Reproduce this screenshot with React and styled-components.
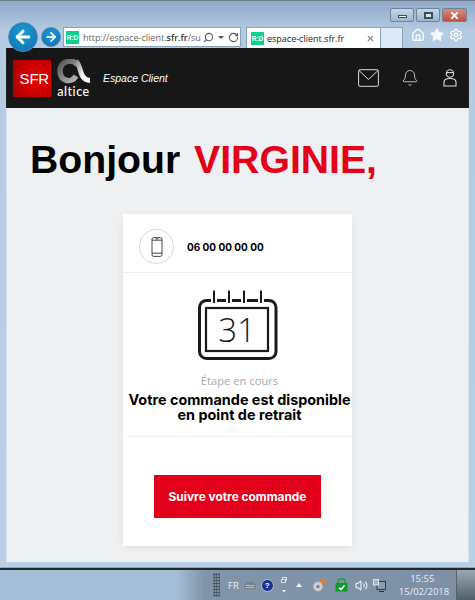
import React from 'react';
import styled, { createGlobalStyle } from 'styled-components';
import { Bell, House, Star, Settings, Search, RotateCw, ArrowLeft, ArrowRight, X, Volume2 } from 'lucide-react';

const Global = createGlobalStyle`
  html, body { margin: 0; padding: 0; width: 475px; height: 600px; overflow: hidden; }
  body { font-family: "Liberation Sans", Arial, sans-serif; }
  * { box-sizing: border-box; }
`;

const Screen = styled.div`
  width: 475px;
  height: 600px;
  display: flex;
  flex-direction: column;
  overflow: hidden;
`;

/* fenetre du navigateur */
const BrowserWindow = styled.div`
  height: 568px;
  display: flex;
  flex-direction: column;
  padding: 0 6px 5px 6px;
  background: linear-gradient(180deg, #8fa9c8 0, #b5cbe2 30px, #bad0e7 100%);
  border-top: 1px solid #6d7b8a;
  border-bottom: 1px solid #19d7ee;
`;

const Chrome = styled.div`
  height: 47px;
  display: flex;
  align-items: flex-start;
  position: relative;
  z-index: 2;
`;

const NavButtons = styled.div`
  display: flex;
  align-items: center;
  gap: 3px;
  margin: 21px 0 0 2px;
`;

const NavCircle = styled.div`
  width: ${p => p.$size}px;
  height: ${p => p.$size}px;
  border-radius: 50%;
  display: flex;
  align-items: center;
  justify-content: center;
  background: radial-gradient(circle at 50% 35%, #1e9bd8, #0a70ac);
  border: 1px solid #5f87ab;
  color: #fff;
`;

const AddressBar = styled.div`
  width: 178px;
  height: 20px;
  margin: 26px 0 0 2px;
  display: flex;
  align-items: center;
  background: #fff;
  border: 1px solid #8ba1b8;
  padding: 0 3px 0 2px;
  color: #555;
`;

const Favicon = styled.div`
  width: 13px;
  height: 13px;
  flex: none;
  background: #0fd08c;
  color: #fff;
  font: bold 6.5px "Liberation Sans", sans-serif;
  display: flex;
  align-items: center;
  justify-content: center;
`;

const Url = styled.div`
  width: 116px;
  flex: none;
  margin-left: 4px;
  white-space: nowrap;
  font: 9px "Open Sans", sans-serif;
  color: #666;
  b { font-weight: 600; color: #333; }
`;

const BarIcons = styled.div`
  display: flex;
  align-items: center;
  gap: 4px;
  margin-left: 4px;
  color: #555;
`;

const SmallCaret = styled.div`
  width: 0;
  height: 0;
  border-left: 3px solid transparent;
  border-right: 3px solid transparent;
  border-top: 3px solid #555;
`;

const UpCaret = styled(SmallCaret)`
  margin-left: ${p => p.$ml}px;
  border-top: none;
  border-bottom: 4px solid #eef3f8;
`;

const Tab = styled.div`
  width: 135px;
  height: 21px;
  margin: 26px 0 0 5px;
  display: flex;
  align-items: center;
  padding: 0 5px 0 4px;
  background: #fff;
  border: 1px solid #8ba1b8;
  border-bottom: none;
  color: #888;
`;

const TabLabel = styled.div`
  flex: 1;
  margin-left: 3px;
  font: 9px "Open Sans", sans-serif;
  color: #222;
`;

const NewTab = styled.div`
  width: 22px;
  height: 21px;
  margin-top: 26px;
  background: #dce9f7;
  border: 1px solid #8ba1b8;
  border-left: none;
  border-bottom: none;
`;

const RightCol = styled.div`
  flex: 1;
  display: flex;
  flex-direction: column;
  align-items: flex-end;
  margin-left: -13px;
`;

const Caption = styled.div`
  display: flex;
  gap: 2px;
  margin: 7px 2px 0 0;
`;

const CaptionButton = styled.div`
  width: ${p => p.$w}px;
  height: 14px;
  border: 1px solid #6f8399;
  border-radius: 2px;
  display: flex;
  align-items: center;
  justify-content: center;
  color: ${p => p.$close ? '#fff' : '#33475c'};
  background: ${p => p.$close
    ? 'linear-gradient(180deg, #d78d7f, #c0503f)'
    : 'linear-gradient(180deg, #c6d7e8, #9fb5cd)'};
`;

const MinGlyph = styled.div`
  width: 9px;
  height: 3px;
  margin-top: 3px;
  background: #fff;
  border: 1px solid #3b4d61;
`;

const MaxGlyph = styled.div`
  width: 9px;
  height: 7px;
  background: #d8e3ee;
  border: 2px solid #3b4d61;
`;

const ToolIcons = styled.div`
  display: flex;
  gap: 5px;
  margin: 6px 6px 0 0;
  color: #f6f9fc;
`;

/* barre noire SFR */
const Header = styled.header`
  height: 60px;
  flex: none;
  display: flex;
  align-items: center;
  background: #171717;
  padding: 0 11px 0 6px;
  border-left: 1px solid #222;
  border-right: 1px solid #222;
`;

const SfrLogo = styled.div`
  width: 38px;
  height: 37px;
  display: flex;
  align-items: center;
  justify-content: flex-end;
  padding-right: 2px;
  color: #fff;
  font: 15px "Liberation Sans", sans-serif;
  letter-spacing: -0.2px;
  background: radial-gradient(circle at 65% 50%, #f00000, #a80000);
`;

const AlticeLogo = styled.div`
  display: flex;
  flex-direction: column;
  align-items: center;
  margin-left: 6px;
  width: 33px;
`;

const AlticeWord = styled.div`
  color: #fff;
  font: 500 12.5px/12px "Lato", sans-serif;
  letter-spacing: 0.5px;
`;

const EspaceClient = styled.div`
  margin-left: 13px;
  color: #fff;
  font: italic 10.5px "Liberation Sans", sans-serif;
`;

const HeaderIcons = styled.div`
  margin-left: auto;
  display: flex;
  align-items: center;
  color: #ddd;
`;

const BellSlot = styled.div`
  display: flex;
  margin: 0 24px 0 22px;
`;

/* contenu */
const Main = styled.main`
  flex: 1;
  background: #eef0f2;
  border-left: 1px solid #d9e4f0;
  border-right: 1px solid #d9e4f0;
  display: flex;
  flex-direction: column;
`;

const Greeting = styled.h1`
  margin: 29px 0 31px 23px;
  font: bold 39.2px/46px "Liberation Sans", sans-serif;
  color: #000;
`;

const Name = styled.span`
  color: #e2001a;
  margin-left: 3px;
`;

const Card = styled.section`
  width: 229px;
  height: 332px;
  margin-left: 116px;
  background: #fff;
  box-shadow: 0 2px 8px rgba(0, 0, 0, 0.06);
  display: flex;
  flex-direction: column;
`;

const LineRow = styled.div`
  height: 59px;
  flex: none;
  display: flex;
  align-items: center;
  padding: 7px 0 0 16px;
  gap: 13px;
  border-bottom: 1px solid #eef0f2;
`;

const PhoneBadge = styled.div`
  width: 35px;
  height: 35px;
  border-radius: 50%;
  border: 1px solid #d5d5dc;
  display: flex;
  align-items: center;
  justify-content: center;
`;

const PhoneNumber = styled.div`
  font: bold 10px "Inter", sans-serif;
  color: #000;
`;

const Status = styled.div`
  display: flex;
  flex-direction: column;
  align-items: center;
  padding: 17px 0 0 4px;
`;

const CalendarSvg = styled.svg`
  margin-left: -4px;
`;

const StepLabel = styled.div`
  margin-top: 12px;
  font: 11.2px/16px "Open Sans", sans-serif;
  color: #a9a9b4;
`;

const StatusTitle = styled.div`
  margin-top: 3px;
  font: bold 14.4px/15px "Inter", sans-serif;
  text-align: center;
  color: #000;
  white-space: nowrap;
`;

const Divider = styled.div`
  height: 1px;
  margin: 14px 0 0 4px;
  background: #eef0f2;
`;

const TrackButton = styled.button`
  width: 167px;
  height: 43px;
  margin: 38px 0 0 31px;
  border: none;
  background: #e2001a;
  color: #fff;
  font: bold 11.9px "Inter", sans-serif;
`;

/* barre des taches */
const Taskbar = styled.footer`
  height: 32px;
  flex: none;
  display: flex;
  align-items: center;
  background: linear-gradient(90deg, #a6bfd9 0, #a6bfd9 175px, #8094aa 205px, #7d90a6 100%);
  border-top: 2px solid #22272e;
`;

const Grip = styled.div`
  width: 7px;
  height: 24px;
  margin-left: 213px;
  background-image: radial-gradient(#4a5562 1px, transparent 1px);
  background-size: 2.5px 3px;
`;

const Lang = styled.div`
  margin-left: 8px;
  font: 9.5px "Open Sans", sans-serif;
  color: #e8eef5;
`;

const TrayItem = styled.div`
  display: flex;
  align-items: center;
  margin-left: ${p => p.$ml}px;
`;

const HelpDot = styled.div`
  width: 13px;
  height: 13px;
  border-radius: 50%;
  background: #1a2f9c;
  border: 1px solid #b8c4d0;
  color: #fff;
  font: bold 8px/11px "Liberation Sans", sans-serif;
  text-align: center;
`;

const Clock = styled.div`
  margin-left: 13px;
  width: 47px;
  text-align: center;
  font: 9.5px/13px "Open Sans", sans-serif;
  color: #e8eef5;
  white-space: nowrap;
`;

const ShowDesktop = styled.div`
  width: 19px;
  height: 100%;
  margin-left: auto;
  border-left: 1px solid #55636f;
  background: linear-gradient(180deg, #9aa7b2, #52606c);
`;

function AlticeMark() {
  return (
    <svg width="33" height="27" viewBox="0 0 33 27" fill="none">
      <defs>
        <linearGradient id="altRing" x1="0" y1="0" x2="1" y2="1">
          <stop offset="0" stopColor="#555" />
          <stop offset="1" stopColor="#bdbdbd" />
        </linearGradient>
        <linearGradient id="altTail" x1="0" y1="0" x2="1" y2="1">
          <stop offset="0" stopColor="#8a8a8a" />
          <stop offset="0.6" stopColor="#f2f2f2" />
          <stop offset="1" stopColor="#ffffff" />
        </linearGradient>
      </defs>
      <path d="M21 6 C15 -1 3 2 3 12 C3 22 14 25 19 17" stroke="url(#altRing)" strokeWidth="5.5" />
      <path d="M19 2 C25 8 22 21 33 21.5" stroke="url(#altTail)" strokeWidth="5" />
    </svg>
  );
}

function MailIcon() {
  return (
    <svg width="21" height="18" viewBox="0 0 21 18" fill="none" stroke="#ddd" strokeWidth="1">
      <rect x="0.6" y="0.7" width="19.8" height="16.6" rx="1.5" />
      <path d="M1 1.5 L10.5 10.5 L20 1.5" />
    </svg>
  );
}

function UserIcon() {
  return (
    <svg width="14" height="18" viewBox="0 0 14 18" fill="none" stroke="#ddd" strokeWidth="1.1">
      <circle cx="7" cy="4.5" r="3.7" />
      <path d="M3.4 3.6 H10.6" />
      <path d="M1 17 V13 C1 10.8 3 9.5 7 9.5 C11 9.5 13 10.8 13 13 V17 Z" />
    </svg>
  );
}

function PhoneIcon() {
  return (
    <svg width="12" height="20" viewBox="0 0 12 20" fill="none" stroke="#333" strokeWidth="0.9">
      <rect x="1" y="0.6" width="10" height="18.8" rx="1.6" />
      <path d="M1 3.2 H11 M1 16.2 H11 M4.5 1.9 H7.5" />
    </svg>
  );
}

function CalendarIcon() {
  return (
    <CalendarSvg width="80" height="71" viewBox="0 0 80 71" fill="none" stroke="#1a1a1a">
      <rect x="1.5" y="10.5" width="76.5" height="58" rx="7" strokeWidth="3" />
      <rect x="8" y="18" width="62" height="43" strokeWidth="2.2" />
      <path d="M16 4 V16 M31 4 V16 M46 4 V16 M63 4 V16" strokeWidth="6" stroke="#fff" />
      <path d="M16 0.5 V13 M31 0.5 V13 M46 0.5 V13 M63 0.5 V13" strokeWidth="2" />
      <path d="M20 10.5 H27 M35 10.5 H42 M50 10.5 H59" strokeWidth="3" />
      <text x="39" y="52" textAnchor="middle" fontFamily="Open Sans, sans-serif" fontWeight="300" fontSize="33" fill="#1a1a1a" stroke="none">31</text>
    </CalendarSvg>
  );
}

function KeyboardIcon() {
  return (
    <svg width="14" height="11" viewBox="0 0 14 11">
      <path d="M3 1 H11 L13.5 5 V10 H0.5 V5 Z" fill="#76838f" stroke="#9aa5af" strokeWidth="0.6" />
      <path d="M2.5 5.5 H11.5 M2.5 7.5 H11.5" stroke="#c3cad1" strokeWidth="0.8" />
    </svg>
  );
}

function TrayExtras() {
  return (
    <svg width="6" height="17" viewBox="0 0 6 17" fill="none">
      <rect x="1.5" y="0.5" width="4" height="3" stroke="#eef3f8" strokeWidth="0.8" />
      <rect x="0.5" y="2.5" width="4" height="3" stroke="#eef3f8" strokeWidth="0.8" fill="#7d90a6" />
      <path d="M1 13 H5 L3 15.5 Z" fill="#eef3f8" />
    </svg>
  );
}

function Disc() {
  return (
    <svg width="14" height="14" viewBox="0 0 14 14">
      <circle cx="6" cy="8.5" r="5" fill="#c9ced3" stroke="#8d949b" strokeWidth="0.6" />
      <circle cx="6" cy="8.5" r="1.5" fill="#6a737c" />
      <path d="M7 3 C9 1 12 1 14 0 C13 3 12 6 10 7 C10 5 9 4 7 3 Z" fill="#ef7a22" />
    </svg>
  );
}

function GreenLock() {
  return (
    <svg width="13" height="14" viewBox="0 0 13 14">
      <path d="M3 5 V2.5 C3 1.5 4 1 6.5 1 C9 1 10 1.5 10 2.5 V5" fill="none" stroke="#12a832" strokeWidth="1.4" />
      <rect x="0.5" y="5" width="12" height="8.5" fill="#0d9c2c" />
      <path d="M4 10 L6 11.5 L9.5 7.5" stroke="#fff" strokeWidth="1.6" fill="none" />
    </svg>
  );
}

function NetworkIcon() {
  return (
    <svg width="13" height="13" viewBox="0 0 13 13" fill="none">
      <rect x="4" y="2.5" width="8.5" height="8" stroke="#27323d" strokeWidth="0.9" fill="#8b9bad" />
      <rect x="0.5" y="0.5" width="5" height="5.5" stroke="#e7edf3" strokeWidth="0.9" fill="#9fb0c2" />
      <path d="M6 12.5 H11" stroke="#27323d" />
    </svg>
  );
}

export default function App() {
  return (
    <Screen>
      <Global />
      <BrowserWindow>
        <Chrome>
          <NavButtons>
            <NavCircle $size={30}><ArrowLeft size={20} strokeWidth={3.4} /></NavCircle>
            <NavCircle $size={20}><ArrowRight size={14} strokeWidth={3} /></NavCircle>
          </NavButtons>
          <AddressBar>
            <Favicon>R:D</Favicon>
            <Url>http://espace-client.<b>sfr.fr</b>/su</Url>
            <BarIcons>
              <Search size={11} strokeWidth={2.2} style={{ transform: 'scaleX(-1)' }} />
              <SmallCaret />
              <RotateCw size={11} strokeWidth={2.2} />
            </BarIcons>
          </AddressBar>
          <Tab>
            <Favicon>R:D</Favicon>
            <TabLabel>espace-client.sfr.fr</TabLabel>
            <X size={9} strokeWidth={3} />
          </Tab>
          <NewTab />
          <RightCol>
            <Caption>
              <CaptionButton $w={24}><MinGlyph /></CaptionButton>
              <CaptionButton $w={24}><MaxGlyph /></CaptionButton>
              <CaptionButton $w={25} $close><X size={11} strokeWidth={4} /></CaptionButton>
            </Caption>
            <ToolIcons>
              <House size={14} strokeWidth={2.4} />
              <Star size={14} strokeWidth={2} fill="#f6f9fc" />
              <Settings size={14} strokeWidth={2.2} />
            </ToolIcons>
          </RightCol>
        </Chrome>
        <Header>
          <SfrLogo>SFR</SfrLogo>
          <AlticeLogo>
            <AlticeMark />
            <AlticeWord>altice</AlticeWord>
          </AlticeLogo>
          <EspaceClient>Espace Client</EspaceClient>
          <HeaderIcons>
            <MailIcon />
            <BellSlot><Bell size={18} strokeWidth={1.1} /></BellSlot>
            <UserIcon />
          </HeaderIcons>
        </Header>
        <Main>
          <Greeting>Bonjour <Name>VIRGINIE,</Name></Greeting>
          <Card>
            <LineRow>
              <PhoneBadge><PhoneIcon /></PhoneBadge>
              <PhoneNumber>06 00 00 00 00</PhoneNumber>
            </LineRow>
            <Status>
              <CalendarIcon />
              <StepLabel>Étape en cours</StepLabel>
              <StatusTitle>Votre commande est disponible<br />en point de retrait</StatusTitle>
            </Status>
            <Divider />
            <TrackButton>Suivre votre commande</TrackButton>
          </Card>
        </Main>
      </BrowserWindow>
      <Taskbar>
        <Grip />
        <Lang>FR</Lang>
        <TrayItem $ml={4}><KeyboardIcon /></TrayItem>
        <TrayItem $ml={4}><HelpDot>?</HelpDot></TrayItem>
        <TrayItem $ml={7}><TrayExtras /></TrayItem>
        <UpCaret $ml={9} />
        <TrayItem $ml={10}><Disc /></TrayItem>
        <TrayItem $ml={9}><GreenLock /></TrayItem>
        <TrayItem $ml={7}><Volume2 size={13} color="#eef3f8" /></TrayItem>
        <TrayItem $ml={5}><NetworkIcon /></TrayItem>
        <Clock>15:55<br />15/02/2018</Clock>
        <ShowDesktop />
      </Taskbar>
    </Screen>
  );
}
